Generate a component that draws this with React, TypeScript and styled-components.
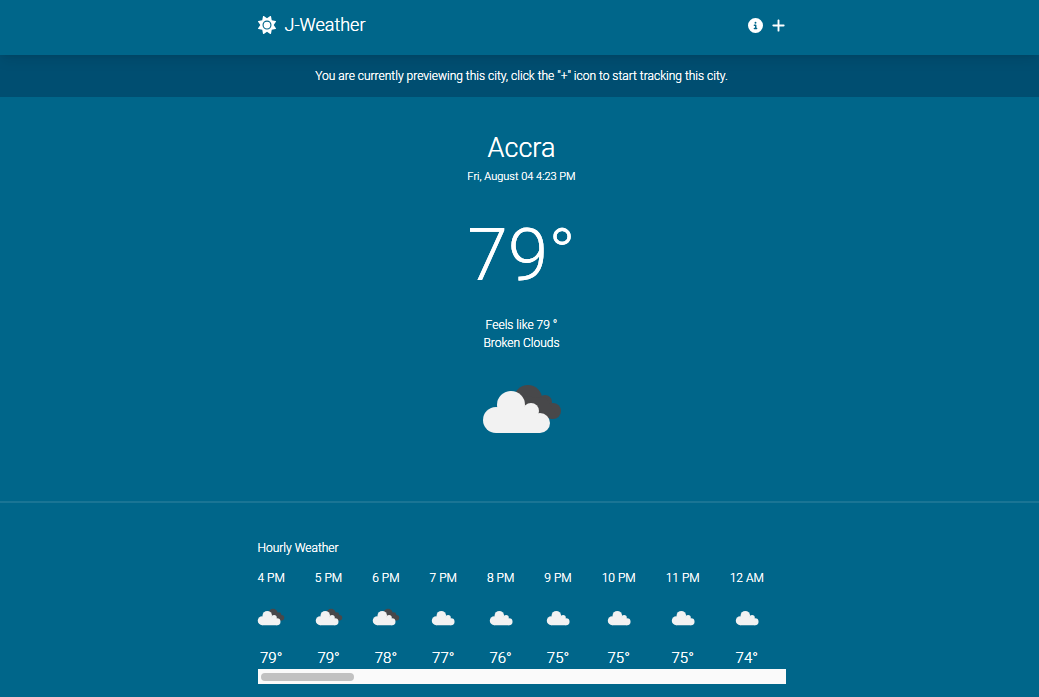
import React from "react";
import styled, { createGlobalStyle } from "styled-components";
import { FaSun, FaCircleInfo, FaPlus } from "react-icons/fa6";

const GlobalStyle = createGlobalStyle`
  *, *::before, *::after { box-sizing: border-box; }
  body {
    margin: 0;
    background: #00668a;
    color: #fff;
    font-family: Roboto, "Liberation Sans", sans-serif;
    font-size: 12px;
    font-weight: 300;
    line-height: 18px;
    text-shadow: 0 0 0 #fff;
  }
  h1, h2, p { margin: 0; font-weight: inherit; }
`;

const Page = styled.div`
  min-height: 100vh;
  overflow: hidden;
`;

const Container = styled.div`
  width: 100%;
  max-width: 528px;
  margin: 0 auto;
`;

const Header = styled.header`
  position: relative;
  padding: 12px 0 17px 4px;
  box-shadow: 0 8px 12px -2px rgba(0, 0, 0, 0.08), 0 3px 5px -3px rgba(0, 0, 0, 0.08);
`;

const Nav = styled(Container)`
  display: flex;
  align-items: center;
  justify-content: space-between;
`;

const Brand = styled.a`
  display: flex;
  align-items: center;
  gap: 9px;
  color: inherit;
  text-decoration: none;
  font-size: 18px;
  line-height: 26px;
`;

const Actions = styled.div`
  display: flex;
  gap: 8px;
`;

const IconButton = styled.button`
  display: flex;
  padding: 0;
  border: 0;
  background: none;
  color: inherit;
  cursor: pointer;
  font-size: 15px;
`;

const Banner = styled.p`
  padding: 12px 0 12px 4px;
  background: #004e71;
  text-align: center;
`;

const Overview = styled.section`
  display: flex;
  flex-direction: column;
  align-items: center;
  padding: 36px 0 33px 4px;
`;

const City = styled.h1`
  font-size: 27px;
  line-height: 30px;
`;

const Timestamp = styled.p`
  margin-top: 6px;
  font-size: 11px;
  line-height: 15px;
`;

const Temperature = styled.p`
  margin: 35px 0 25px;
  font-size: 73px;
  line-height: 72px;
`;

const Conditions = styled.p`
  text-align: center;
`;

const LargeIcon = styled.div`
  display: flex;
  margin-top: 4px;
  width: 112px;
`;

const Divider = styled.hr`
  margin: 0;
  border: 0;
  height: 2px;
  background: rgba(255, 255, 255, 0.1);
`;

const Hourly = styled.section`
  padding: 36px 0 11px 4px;
`;

const SectionTitle = styled.h2`
  font-size: 12px;
`;

const Hours = styled.ul`
  display: flex;
  gap: 30px;
  margin: 12px 0 0;
  padding: 0;
  list-style: none;
`;

const Hour = styled.li`
  display: flex;
  flex-direction: column;
  align-items: center;
`;

const HourIcon = styled.div`
  display: flex;
  justify-content: center;
  width: 27px;
  margin: 12px 0 10px;
  svg { flex: none; width: 38px; height: 38px; }
`;

const HourTemp = styled.p`
  font-size: 15px;
  line-height: 22px;
`;

const ScrollTrack = styled.div`
  height: 15px;
  padding: 4px 3px;
  background: #fafafa;
`;

const ScrollThumb = styled.div`
  width: 18%;
  height: 8px;
  border-radius: 4px;
  background: #c1c1c1;
`;

function CloudIcon({ broken = false }: { broken?: boolean }) {
  return (
    <svg viewBox={broken ? "0 0 112 112" : "-6 0 112 112"} width="100%" aria-hidden="true">
      {broken && (
        <g fill="#48484a">
          <circle cx="62" cy="43" r="14" />
          <circle cx="79" cy="46" r="7" />
          <circle cx="87" cy="55" r="8" />
          <path d="M52 40L80 42L90 58L86 63L70 58Z" />
        </g>
      )}
      <g fill="#f2f2f2">
        <circle cx="30" cy="64" r="13" />
        <circle cx="45" cy="49" r="14" />
        <circle cx="65" cy="55" r="8" />
        <circle cx="74" cy="67" r="10" />
        <path d="M30 77V60L45 45L65 58L74 66V77Z" />
      </g>
    </svg>
  );
}

const hours = [
  { time: "4 PM", temp: 79, broken: true },
  { time: "5 PM", temp: 79, broken: true },
  { time: "6 PM", temp: 78, broken: true },
  { time: "7 PM", temp: 77, broken: false },
  { time: "8 PM", temp: 76, broken: false },
  { time: "9 PM", temp: 75, broken: false },
  { time: "10 PM", temp: 75, broken: false },
  { time: "11 PM", temp: 75, broken: false },
  { time: "12 AM", temp: 74, broken: false },
];

export default function App() {
  return (
    <Page>
      <GlobalStyle />
      <Header>
        <Nav as="nav">
          <Brand href="#">
            <FaSun />
            J-Weather
          </Brand>
          <Actions>
            <IconButton aria-label="About"><FaCircleInfo /></IconButton>
            <IconButton aria-label="Track city"><FaPlus /></IconButton>
          </Actions>
        </Nav>
      </Header>
      <Banner>
        You are currently previewing this city, click the "+" icon to start tracking this city.
      </Banner>
      <main>
        <Overview>
          <City>Accra</City>
          <Timestamp>Fri, August 04 4:23 PM</Timestamp>
          <Temperature>79°</Temperature>
          <Conditions>Feels like 79 °</Conditions>
          <Conditions>Broken Clouds</Conditions>
          <LargeIcon><CloudIcon broken /></LargeIcon>
        </Overview>
        <Divider />
        <Hourly>
          <Container>
            <SectionTitle>Hourly Weather</SectionTitle>
            <Hours>
              {hours.map((h) => (
                <Hour key={h.time}>
                  <span>{h.time}</span>
                  <HourIcon><CloudIcon broken={h.broken} /></HourIcon>
                  <HourTemp>{h.temp}°</HourTemp>
                </Hour>
              ))}
            </Hours>
            <ScrollTrack><ScrollThumb /></ScrollTrack>
          </Container>
        </Hourly>
      </main>
    </Page>
  );
}
